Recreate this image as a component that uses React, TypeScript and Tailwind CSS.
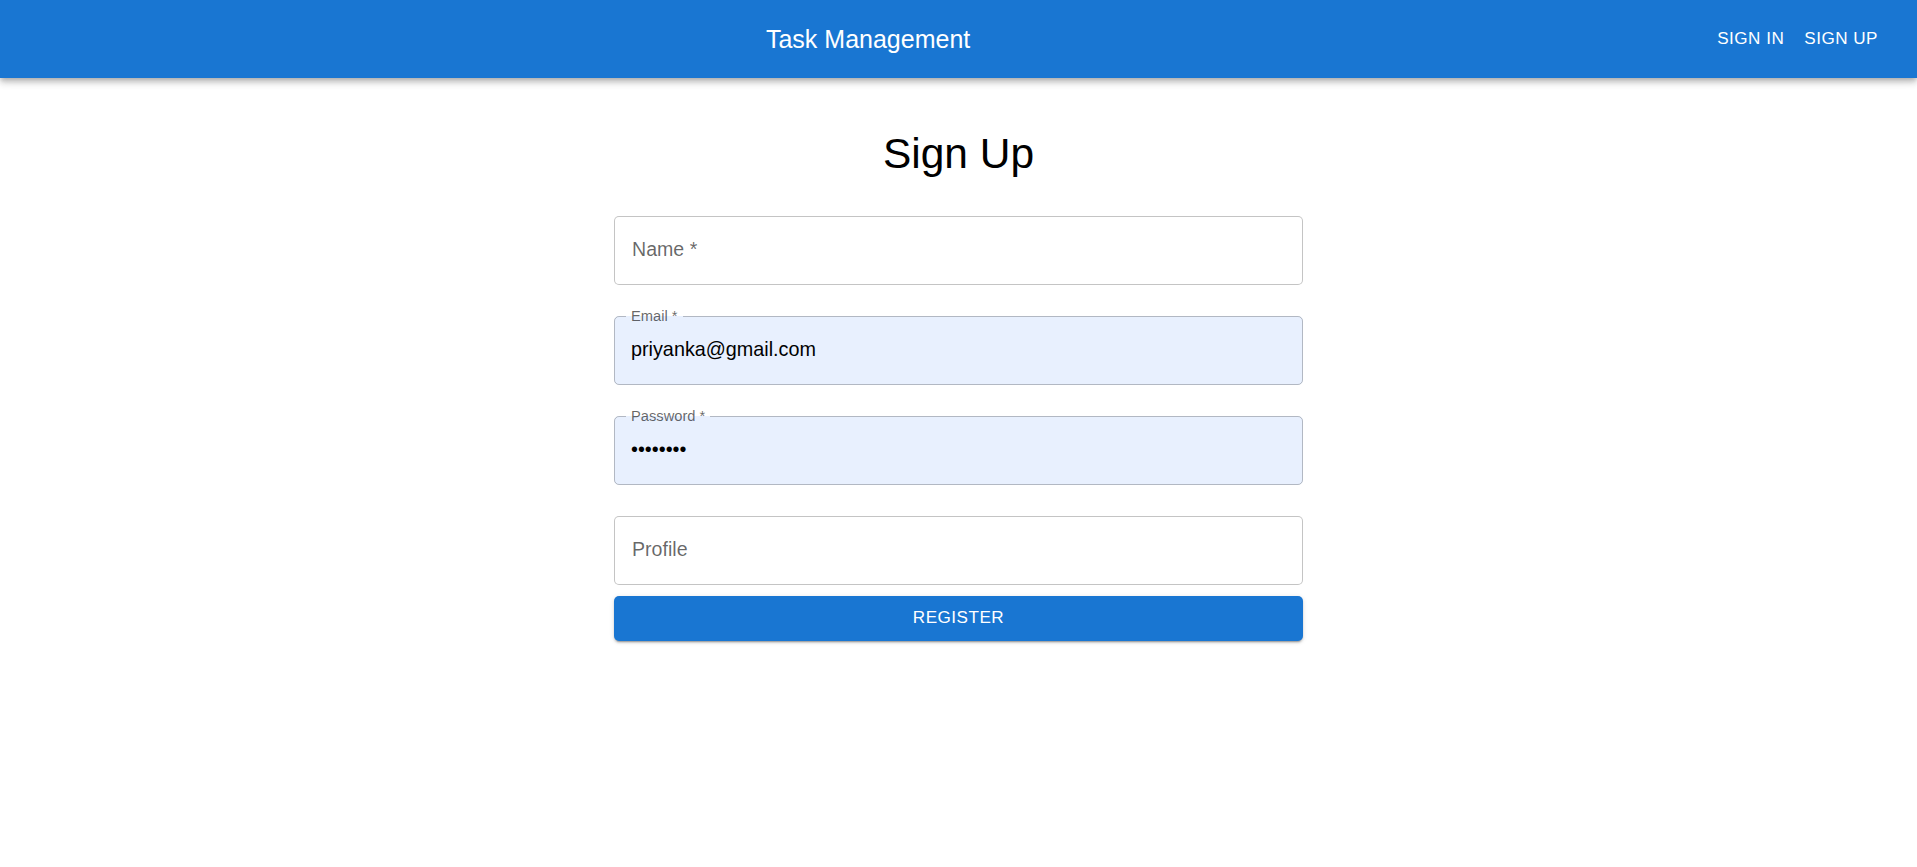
import React from "react";

const font = { fontFamily: '"Liberation Sans", Arial, Helvetica, sans-serif' };

function PlainField({ label }: { label: string }) {
  return (
    <div className="relative h-[68.5px] w-full rounded-[5px] border border-[rgba(0,0,0,0.23)] bg-white flex items-center">
      <span className="pl-[17px] text-[19.6px] text-[rgba(0,0,0,0.6)] leading-none">{label}</span>
    </div>
  );
}

function FilledField({ label, value }: { label: string; value: string }) {
  return (
    <div className="relative h-[68.5px] w-full rounded-[5px] bg-[#e8f0fe] flex items-center">
      <div className="pointer-events-none absolute inset-0 rounded-[5px] border border-[rgba(0,0,0,0.23)]" />
      <span className="absolute left-[12px] top-[-9px] px-[5px] h-[18px] leading-[18px] text-[14.7px] text-[rgba(0,0,0,0.6)] bg-[linear-gradient(to_bottom,#ffffff_50%,#e8f0fe_50%)]">
        {label}
      </span>
      <span className="pl-[17px] text-[19.8px] text-black leading-none">{value}</span>
    </div>
  );
}

export default function App() {
  return (
    <div className="min-h-screen bg-white" style={font}>
      <header className="relative z-10 h-[78px] bg-[#1976d2] text-white flex items-center px-[29px] shadow-[0_2px_5px_-1px_rgba(0,0,0,0.2),0_5px_6px_0_rgba(0,0,0,0.14),0_1px_12px_0_rgba(0,0,0,0.12)]">
        <div className="flex-1 text-center text-[25px] leading-none">Task Management</div>
        <div className="flex items-center">
          <button className="px-[10px] py-[7px] text-[17.1px] leading-none uppercase tracking-[0.49px] text-white">
            Sign In
          </button>
          <button className="px-[10px] py-[7px] text-[17.1px] leading-none uppercase tracking-[0.49px] text-white">
            Sign Up
          </button>
        </div>
      </header>

      <main className="flex flex-col items-center">
        <h1 className="mt-[50px] text-[42.5px] leading-[52px] text-black font-normal">Sign Up</h1>
        <div className="mt-[36px] w-[689px] flex flex-col">
          <PlainField label="Name *" />
          <div className="mt-[31.5px]">
            <FilledField label="Email *" value="priyanka@gmail.com" />
          </div>
          <div className="mt-[31.5px]">
            <FilledField label="Password *" value="••••••••" />
          </div>
          <div className="mt-[31.5px]">
            <PlainField label="Profile" />
          </div>
          <button className="mt-[11px] h-[45px] w-full rounded-[5px] bg-[#1976d2] text-white text-[17.1px] uppercase tracking-[0.49px] shadow-[0_3px_1px_-2px_rgba(0,0,0,0.2),0_2px_2px_0_rgba(0,0,0,0.14),0_1px_5px_0_rgba(0,0,0,0.12)]">
            Register
          </button>
        </div>
      </main>
    </div>
  );
}
